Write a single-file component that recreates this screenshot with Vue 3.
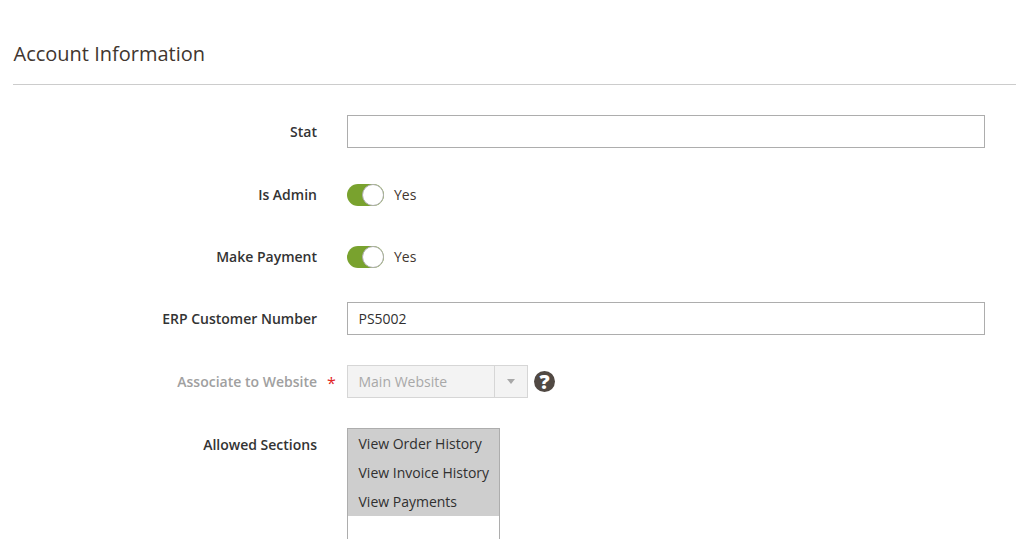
<script setup>
const sections = ['View Order History', 'View Invoice History', 'View Payments']
</script>

<template>
  <main class="page">
    <h2 class="title">Account Information</h2>

    <form class="fields">
      <div class="field">
        <label class="field-label">Stat</label>
        <input class="text-input" type="text" />
      </div>

      <div class="field toggle-row">
        <label class="field-label">Is Admin</label>
        <div class="toggle-wrap">
          <span class="toggle"><span class="knob"></span></span>
          <span class="toggle-text">Yes</span>
        </div>
      </div>

      <div class="field toggle-row">
        <label class="field-label">Make Payment</label>
        <div class="toggle-wrap">
          <span class="toggle"><span class="knob"></span></span>
          <span class="toggle-text">Yes</span>
        </div>
      </div>

      <div class="field">
        <label class="field-label">ERP Customer Number</label>
        <input class="text-input" type="text" value="PS5002" />
      </div>

      <div class="field">
        <label class="field-label disabled required">Associate to Website</label>
        <div class="select-wrap">
          <div class="fake-select">
            <span class="select-value">Main Website</span>
            <span class="select-arrow"><i></i></span>
          </div>
          <span class="help">?</span>
        </div>
      </div>

      <div class="field last">
        <label class="field-label">Allowed Sections</label>
        <div class="multi">
          <div v-for="item in sections" :key="item" class="multi-option">{{ item }}</div>
        </div>
      </div>
    </form>
  </main>
</template>

<style>
html,
body {
  margin: 0;
  height: 100%;
  overflow: hidden;
  background: #fff;
}
</style>

<style scoped>
.page {
  padding: 40px 0 0 13px;
  font-family: "Open Sans", "DejaVu Sans", sans-serif;
  font-size: 14px;
  color: #303030;
}

.title {
  margin: 0;
  padding: 0 0 17px 0.5px;
  border-bottom: 1px solid #cccccc;
  font-size: 20px;
  line-height: 27px;
  font-weight: 400;
  color: #41362f;
}

.fields {
  padding-top: 30px;
}

.field {
  display: flex;
  align-items: center;
  gap: 30px;
  min-height: 33px;
  margin-bottom: 30px;
}

.field.toggle-row {
  min-height: 32px;
}

.field.last {
  align-items: flex-start;
  margin-bottom: 0;
}

.field-label {
  position: relative;
  width: 304px;
  text-align: right;
  font-weight: 600;
  line-height: 19px;
  color: #333333;
}

.field.last .field-label {
  padding-top: 7px;
}

.field-label.disabled {
  color: #a0a0a0;
}

.required::after {
  content: "*";
  position: absolute;
  left: 314px;
  top: 2px;
  font-weight: 400;
  font-size: 16px;
  color: #e22626;
}

.text-input {
  box-sizing: border-box;
  width: 638px;
  height: 33px;
  padding: 0 10px 0 10.5px;
  border: 1px solid #adadad;
  border-radius: 0;
  outline: none;
  font-family: inherit;
  font-size: 14px;
  color: #303030;
}

.toggle-wrap {
  display: flex;
  align-items: center;
  gap: 10px;
}

.toggle {
  box-sizing: border-box;
  display: flex;
  justify-content: flex-end;
  width: 37px;
  height: 22px;
  margin-top: 2px;
  border-radius: 11px;
  background: #79a22e;
}

.knob {
  box-sizing: border-box;
  width: 22px;
  height: 22px;
  border: 1px solid #adadad;
  border-radius: 50%;
  background: #fff;
}

.toggle-text {
  line-height: 19px;
  color: #41362f;
}

.select-wrap {
  display: flex;
  align-items: center;
  gap: 6px;
}

.fake-select {
  box-sizing: border-box;
  display: flex;
  width: 181px;
  height: 33px;
  border: 1px solid #d6d6d6;
  background: #f3f3f3;
}

.select-value {
  flex: 1;
  padding-left: 10.5px;
  line-height: 31px;
  color: #a8a8a8;
}

.select-arrow {
  display: flex;
  align-items: center;
  justify-content: center;
  width: 32px;
  border-left: 1px solid #d6d6d6;
}

.select-arrow i {
  width: 0;
  height: 0;
  border-left: 4px solid transparent;
  border-right: 4px solid transparent;
  border-top: 5px solid #a8a8a8;
}

.help {
  width: 21px;
  height: 21px;
  margin-top: -1px;
  border-radius: 50%;
  background: #514943;
  color: #fff;
  font-size: 20px;
  font-weight: 800;
  line-height: 21px;
  text-align: center;
}

.multi {
  box-sizing: border-box;
  width: 153px;
  height: 160px;
  border: 1px solid #adadad;
}

.multi-option {
  height: 29px;
  padding-left: 10.5px;
  background: #cecece;
  line-height: 29px;
  color: #303030;
}
</style>
